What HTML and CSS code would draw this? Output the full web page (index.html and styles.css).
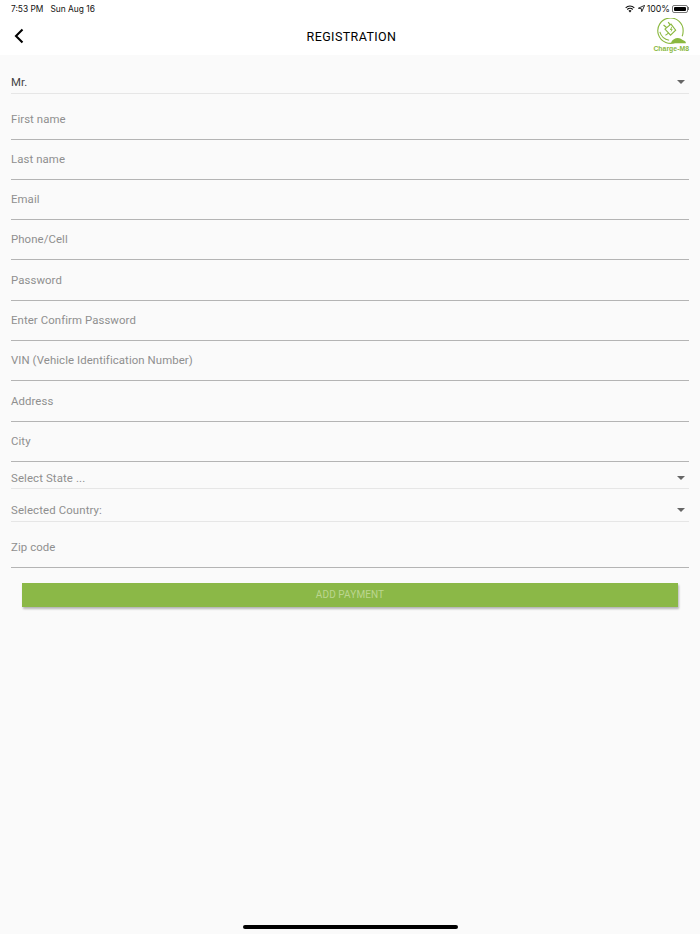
FILE: index.html
```html
<!DOCTYPE html>
<html lang="en">
<head>
<meta charset="utf-8">
<title>Registration</title>
<link rel="stylesheet" href="styles.css">
</head>
<body>
<div class="app">
  <header class="header">
    <div class="status">
      <div class="status-left"><span>7:53 PM</span><span>Sun Aug 16</span></div>
      <div class="status-right">
        <svg class="i-wifi" viewBox="0 0 12 9" width="10" height="8"><path d="M6 8.600 4.200 6.600a2.600 2.600 0 0 1 3.600 0Z" fill="#111"/><path d="M2.700 5.100a4.700 4.700 0 0 1 6.600 0" fill="none" stroke="#111" stroke-width="1.300"/><path d="M.8 3.100a7.400 7.400 0 0 1 10.400 0" fill="none" stroke="#111" stroke-width="1.300"/></svg>
        <svg class="i-loc" viewBox="0 0 8 8" width="7" height="7"><path d="M7.600.4.4 3.700l3.400.5.5 3.400Z" fill="none" stroke="#111" stroke-width="1"/></svg>
        <span>100%</span>
        <div class="battery"><div class="battery-fill"></div></div><div class="battery-tip"></div>
      </div>
    </div>
    <nav class="nav">
      <button class="back" aria-label="Back"><svg viewBox="0 0 10 16" width="10" height="16"><path d="M8.500 1.500 2 8l6.500 6.500" fill="none" stroke="#000" stroke-width="2.100"/></svg></button>
      <h1 class="title">REGISTRATION</h1>
      <div class="logo">
        <svg viewBox="0 0 34 29" width="32" height="27">
          <path d="M23 25.500A13.600 13.600 0 1 1 30 14.500c0 2-.4 3.600-1 5" fill="none" stroke="#8ab83f" stroke-width="1.200"/>
          <path d="M9 7.500l3.500 3M14 4.500l2.500 3.500" stroke="#8ab83f" stroke-width="1.300" fill="none"/>
          <path d="M10.500 12 17 6.500l5 6.500-5.500 5.500Z" fill="#fff" stroke="#8ab83f" stroke-width="1.200"/>
          <path d="M11 18.500c2-1 2.500-1.500 3.500-2.500M5 15c1.500 5 4 8 10 9" stroke="#8ab83f" stroke-width="1.100" fill="none"/>
          <path d="M17.500 9.500 15.800 13h1.500l-.8 2.500 2.400-3.500h-1.500l.8-2.500Z" fill="#8ab83f"/>
          <path d="M17 27c.5-2.500 2-3.500 3.500-4.500 2-1.300 5-1.300 7-.2 1 .6 2 1.400 3.200 1.800 1.500.4 2.300 1.400 2.300 2.900Z" fill="#8ab83f"/>
        </svg>
        <span class="logo-text">Charge-M8</span>
      </div>
    </nav>
  </header>

  <form class="form">
    <div class="select first"><span class="value">Mr.</span><span class="caret"></span></div>
    <div class="field">First name</div>
    <div class="field">Last name</div>
    <div class="field">Email</div>
    <div class="field">Phone/Cell</div>
    <div class="field">Password</div>
    <div class="field">Enter Confirm Password</div>
    <div class="field">VIN (Vehicle Identification Number)</div>
    <div class="field">Address</div>
    <div class="field">City</div>
    <div class="select state"><span>Select State ...</span><span class="caret"></span></div>
    <div class="select country"><span>Selected Country:</span><span class="caret"></span></div>
    <div class="field zip">Zip code</div>
    <div class="submit">ADD PAYMENT</div>
  </form>
  <div class="home-bar"></div>
</div>
</body>
</html>
```

FILE: styles.css
```css
* { box-sizing: border-box; }
html, body { margin: 0; padding: 0; }
body {
  background: #fafafa;
  font-family: Roboto, "Liberation Sans", sans-serif;
  color: #888;
}
.app { position: relative; height: 934px; overflow: hidden; }
.header { background: #fff; height: 55px; display: flex; flex-direction: column; }
.status {
  height: 17px;
  padding: 0 11px;
  display: flex;
  justify-content: space-between;
  align-items: center;
  font-size: 8.400px;
  color: #111;
  font-family: Inter, Roboto, sans-serif;
}
.status-left { display: flex; gap: 7px; }
.status-right { display: flex; align-items: center; gap: 2px; }
.status-right span { font-size: 8.800px; }
.i-wifi { margin-right: 1px; }
.battery {
  width: 16px; height: 8px;
  border: 1px solid #777;
  border-radius: 2px;
  padding: 1px;
}
.battery-fill { background: #000; height: 100%; border-radius: 1px; }
.battery-tip { width: 1px; height: 3px; background: #777; margin-left: -2px; }
.nav {
  flex: 1;
  display: grid;
  grid-template-columns: 1fr auto 1fr;
  align-items: center;
  padding: 0 11px 0 14px;
}
.back { background: none; border: 0; padding: 0; justify-self: start; display: flex; }
.title {
  margin: 0;
  font-size: 12.500px;
  font-weight: 400;
  letter-spacing: .4px;
  color: #000;
  font-family: Roboto, sans-serif;
}
.logo {
  justify-self: end;
  display: flex;
  flex-direction: column;
  align-items: center;
  margin-top: -3px;
}
.logo svg { display: block; }
.logo-text {
  font: 700 6.900px/7px "Liberation Sans", sans-serif;
  color: #8ab83f;
  margin-top: 0;
}
.form { padding: 0 11px; display: flex; flex-direction: column; }
.select {
  display: flex;
  justify-content: space-between;
  align-items: center;
  font-size: 11.400px;
  letter-spacing: .12px;
  border-bottom: 1px solid #e6e6e6;
  padding-right: 4px;
}
.select.first { height: 39px; padding-top: 16px; }
.select.first .value { color: #444; }
.select.state { height: 27px; padding-top: 7px; }
.select.country { height: 33px; padding-top: 10px; }
.caret {
  width: 0; height: 0;
  border-left: 4px solid transparent;
  border-right: 4px solid transparent;
  border-top: 4px solid #666;
}
.field {
  height: 40.300px;
  display: flex;
  align-items: flex-end;
  padding-bottom: 6px;
  font-size: 11.400px;
  letter-spacing: .08px;
  line-height: 28px;
  border-bottom: 1px solid #b4b4b4;
}
.field.zip { height: 46px; }
.select, .field { color: #8f8f8f; }
.field:nth-child(2) { height: 45.500px; }
.submit {
  margin: 15px 11px 0;
  height: 24px;
  background: #8bb847;
  color: #bcd68f;
  font-size: 10px;
  letter-spacing: .1px;
  display: flex;
  align-items: center;
  justify-content: center;
  box-shadow: 1px 2px 2px rgba(0,0,0,.28);
}
.home-bar {
  position: absolute;
  left: 243px;
  bottom: 5px;
  width: 215px;
  height: 4px;
  border-radius: 2px;
  background: #000;
}
```
